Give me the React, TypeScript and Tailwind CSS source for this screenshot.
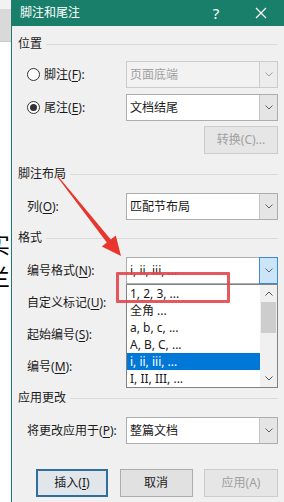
import React from 'react'

const font = { fontFamily: '"Noto Sans", "Noto Sans CJK SC", sans-serif' }

// 小箭头
const Chevron = ({ up = false, color = '#606060' }: { up?: boolean; color?: string }) => (
  <svg width="8" height="5" viewBox="0 0 8 5" className="block">
    <polyline
      points={up ? '0.5,4.5 4,1 7.5,4.5' : '0.5,0.5 4,4 7.5,0.5'}
      fill="none"
      stroke={color}
      strokeWidth="1"
    />
  </svg>
)

const Mn = ({ k }: { k: string }) => (
  <>
    (<span className="underline underline-offset-2">{k}</span>):
  </>
)

const Header = ({ title }: { title: string }) => (
  <div className="flex items-center h-[16px]">
    <span className="text-[12px] text-[#1a1a1a] leading-none">{title}</span>
    <div className="flex-1 h-px bg-[#dadada] ml-[4px]" />
  </div>
)

const Select = ({
  value,
  disabled = false,
  focused = false,
}: {
  value: string
  disabled?: boolean
  focused?: boolean
}) => (
  <div
    className={`flex-1 h-[27px] flex border ${
      disabled ? 'bg-[#f2f2f2] border-[#cccccc]' : 'bg-white border-[#adadad]'
    }`}
  >
    <div
      className={`flex-1 flex items-center pl-[3px] text-[12px] ${
        disabled ? 'text-[#a0a0a0]' : 'text-[#1a1a1a]'
      }`}
    >
      {value}
    </div>
    <div
      className={`w-[18px] flex items-center justify-center ${
        focused
          ? 'bg-[#cce4f7] border border-[#3c8ad6] -my-px -mr-px w-[19px]'
          : disabled
            ? 'bg-[#ececec] border-l border-[#cccccc]'
            : 'bg-[#e5e5e5] border-l border-[#c4c4c4]'
      }`}
    >
      <Chevron color={disabled ? '#a0a0a0' : '#606060'} />
    </div>
  </div>
)

const Radio = ({ checked }: { checked?: boolean }) => (
  <div className="w-[13px] h-[13px] rounded-full border border-[#333] bg-white flex items-center justify-center">
    {checked && <div className="w-[7px] h-[7px] rounded-full bg-[#333]" />}
  </div>
)

const listItems = ['1, 2, 3, ...', '全角 ...', 'a, b, c, ...', 'A, B, C, ...', 'i, ii, iii, ...', 'I, II, III, ...']

export default function App() {
  return (
    <div className="relative w-[284px] h-[502px] flex overflow-hidden bg-white" style={font}>
      {/* 背景文档 */}
      <div className="w-[11px] flex flex-col overflow-hidden">
        <div className="h-[9px] bg-[#f2f2f2]" />
        <div className="h-[33px] bg-[#d9d9d9] border-b border-[#c8c8c8]" />
        <div className="flex-1 bg-white">
          <div className="mt-[186px] -ml-[13px] flex flex-col text-[23px] leading-[33px] text-black">
            <span>实</span>
            <span>兰</span>
          </div>
        </div>
      </div>

      {/* 对话框 */}
      <div className="flex-1 flex flex-col bg-[#f0f0f0] border-l border-[#1a7f6a]">
        <div className="h-[26px] -ml-px bg-[#1a7f6a] flex items-center text-white">
          <span className="pl-[9px] text-[12px] flex-1">脚注和尾注</span>
          <span className="text-[15px] w-[20px] text-center">?</span>
          <span className="w-[12px]" />
          <span className="w-[46px] flex justify-center">
            <svg width="12" height="12" viewBox="0 0 12 12">
              <path d="M1 1 L11 11 M11 1 L1 11" stroke="white" strokeWidth="1.2" />
            </svg>
          </span>
        </div>

        <div className="flex flex-col pl-[6px] pr-[6px] text-[12px] text-[#1a1a1a]">
          <div className="mt-[10px]">
            <Header title="位置" />
          </div>
          <div className="mt-[9px] flex items-center">
            <div className="w-[108px] pl-[9px] flex items-center gap-[4px]">
              <Radio />
              <span>
                脚注<Mn k="F" />
              </span>
            </div>
            <Select value="页面底端" disabled />
          </div>
          <div className="mt-[6px] flex items-center">
            <div className="w-[108px] pl-[9px] flex items-center gap-[4px]">
              <Radio checked />
              <span>
                尾注<Mn k="E" />
              </span>
            </div>
            <Select value="文档结尾" />
          </div>
          <div className="mt-[5px] self-end w-[74px] h-[28px] bg-[#e6e6e6] border border-[#cccccc] flex items-center justify-center text-[#a0a0a0]">
            转换(C)...
          </div>

          <div className="mt-[12px]">
            <Header title="脚注布局" />
          </div>
          <div className="mt-[11px] flex items-center">
            <div className="w-[108px] pl-[9px]">
              列<Mn k="O" />
            </div>
            <Select value="匹配节布局" />
          </div>

          <div className="mt-[10px]">
            <Header title="格式" />
          </div>
          <div className="mt-[11px] flex items-center">
            <div className="w-[108px] pl-[9px]">
              编号格式<Mn k="N" />
            </div>
            <Select value="i, ii, iii, ..." focused />
          </div>
          <div className="mt-[5px] h-[27px] flex items-center pl-[9px]">
            自定义标记<Mn k="U" />
          </div>
          <div className="mt-[5px] h-[27px] flex items-center pl-[9px]">
            起始编号<Mn k="S" />
          </div>
          <div className="mt-[5px] h-[27px] flex items-center pl-[9px]">
            编号<Mn k="M" />
          </div>

          <div className="mt-[10px]">
            <Header title="应用更改" />
          </div>
          <div className="mt-[11px] flex items-center">
            <div className="w-[108px] pl-[9px]">
              将更改应用于<Mn k="P" />
            </div>
            <Select value="整篇文档" />
          </div>

          <div className="mt-[25px] flex justify-between pl-[18px]">
            <div className="w-[72px] h-[28px] border-2 border-[#2f6f9f] bg-[#e1e6ea] flex items-center justify-center">
              插入(<span className="underline underline-offset-2">I</span>)
            </div>
            <div className="w-[73px] h-[28px] border border-[#adadad] bg-[#e1e1e1] flex items-center justify-center">
              取消
            </div>
            <div className="w-[74px] h-[28px] border border-[#cccccc] bg-[#e6e6e6] flex items-center justify-center text-[#a0a0a0]">
              应用(A)
            </div>
          </div>
        </div>
      </div>

      {/* 下拉列表 */}
      <div className="absolute left-[126px] top-[284px] w-[152px] h-[104px] bg-white border border-[#828282] flex text-[12px] text-[#1a1a1a]">
        <div className="flex-1 flex flex-col">
          {listItems.map((t, i) => (
            <div
              key={t}
              className={`h-[17px] flex items-center pl-[3px] ${
                i === 4 ? 'bg-[#0078d7] text-white' : ''
              }`}
            >
              {t}
            </div>
          ))}
        </div>
        <div className="w-[17px] bg-[#f0f0f0] flex flex-col">
          <div className="h-[17px] flex items-center justify-center">
            <Chevron up color="#505050" />
          </div>
          <div className="h-[31px] mx-[1px] bg-[#cdcdcd]" />
          <div className="flex-1" />
          <div className="h-[17px] flex items-center justify-center">
            <Chevron color="#505050" />
          </div>
        </div>
      </div>

      {/* 红框标注 */}
      <div className="absolute left-[116px] top-[272px] w-[114px] h-[31px] border-[3px] border-[#e0474c]/90 rounded-[1px]" />

      {/* 红色箭头 */}
      <svg className="absolute left-0 top-0 pointer-events-none" width="284" height="502">
        <polygon
          points="58.3,176.5 110.8,239.5 115.8,235.5 121,256 101.8,246.5 106.8,242.5 57.7,177.5"
          fill="#e8362f"
        />
      </svg>
    </div>
  )
}
